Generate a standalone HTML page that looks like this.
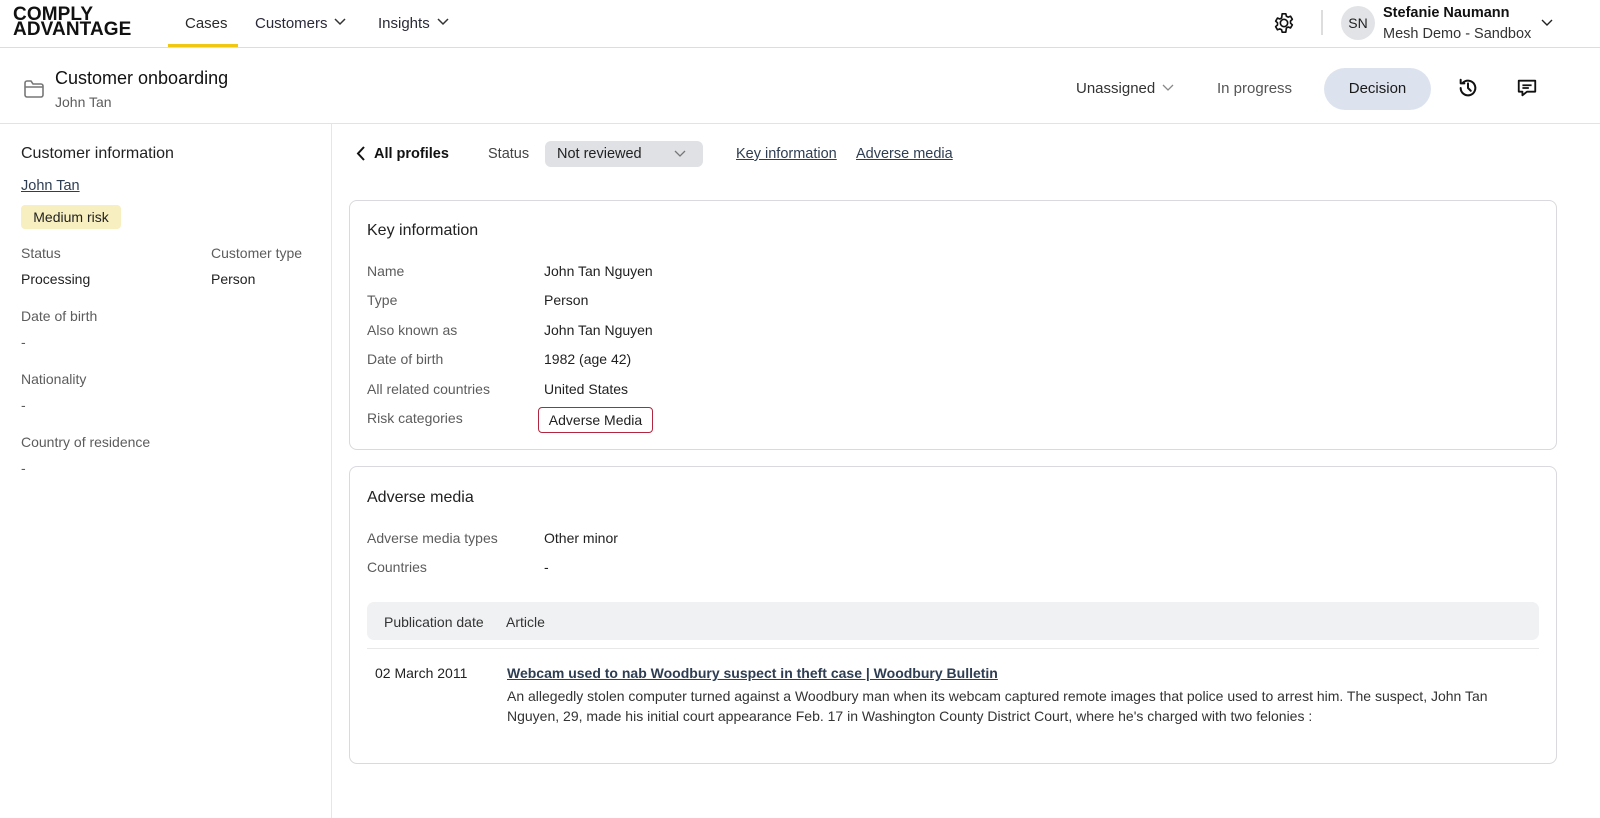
<!DOCTYPE html>
<html><head><meta charset="utf-8"><style>
*{box-sizing:border-box;margin:0;padding:0}
body{width:1600px;height:818px;overflow:hidden;background:#fff;font-family:"Liberation Sans",sans-serif;color:#1f1f1f;font-size:14px;position:relative}
.a{position:absolute;white-space:nowrap}
.g{color:#5c5c5c}
.lnk{color:#2e3d52;text-decoration:underline}
svg{position:absolute}
</style></head><body>
<div class="a" style="left:13px;top:7px;font-weight:900;font-size:19px;line-height:15px;letter-spacing:0.1px;color:#111">COMPLY<br>ADVANTAGE</div>
<div class="a" style="left:185px;top:15px;font-size:15px;color:#2a2a2a">Cases</div>
<div class="a" style="left:168px;top:44px;width:70px;height:3px;background:#f0c814"></div>
<div class="a" style="left:255px;top:15px;font-size:15px;color:#2a2a3a">Customers</div>
<svg style="left:334px;top:17px" width="12" height="10" viewBox="0 0 12 10"><path d="M1 2l5 5 5-5" stroke="#333" stroke-width="1.5" fill="none"/></svg>
<div class="a" style="left:378px;top:15px;font-size:15px;color:#2a2a3a">Insights</div>
<svg style="left:437px;top:17px" width="12" height="10" viewBox="0 0 12 10"><path d="M1 2l5 5 5-5" stroke="#333" stroke-width="1.5" fill="none"/></svg>
<div class="a" style="left:0;top:47px;width:1600px;height:1px;background:#ddd"></div>
<svg style="left:1273px;top:12px" width="22" height="22" viewBox="0 0 24 24"><path d="M12 8a4 4 0 1 0 0 8 4 4 0 0 0 0-8zM10 2h4l.6 2.6 2 1 2.5-1 2 3.4-2 1.8v2.4l2 1.8-2 3.4-2.5-1-2 1L14 22h-4l-.6-2.6-2-1-2.5 1-2-3.4 2-1.8v-2.4l-2-1.8 2-3.4 2.5 1 2-1z" fill="none" stroke="#111" stroke-width="1.8" stroke-linejoin="round"/></svg>
<div class="a" style="left:1321px;top:10px;width:2px;height:25px;background:#ddd"></div>
<div class="a" style="left:1341px;top:6px;width:34px;height:34px;border-radius:50%;background:#e2e3e6;text-align:center;line-height:34px;font-size:14px;color:#222">SN</div>
<div class="a" style="left:1383px;top:5px;font-size:14.5px;font-weight:bold;color:#111">Stefanie Naumann</div>
<div class="a" style="left:1383px;top:26px;font-size:14.5px;color:#333">Mesh Demo - Sandbox</div>
<svg style="left:1541px;top:18px" width="12" height="9" viewBox="0 0 12 9"><path d="M1 2l5 5 5-5" stroke="#222" stroke-width="1.4" fill="none"/></svg>
<svg style="left:23px;top:79px" width="22" height="20" viewBox="0 0 22 20"><path d="M2 4v12a2 2 0 0 0 2 2h14a2 2 0 0 0 2-2V7a2 2 0 0 0-2-2h-8L8 2H4a2 2 0 0 0-2 2zM2 8h18" fill="none" stroke="#777" stroke-width="1.6"/></svg>
<div class="a" style="left:55px;top:68px;font-size:18px;color:#111">Customer onboarding</div>
<div class="a g" style="left:55px;top:94px;font-size:14px">John Tan</div>
<div class="a" style="left:1076px;top:80px;font-size:15px;color:#333">Unassigned</div>
<svg style="left:1162px;top:83px" width="12" height="9" viewBox="0 0 12 9"><path d="M1 2l5 5 5-5" stroke="#888" stroke-width="1.3" fill="none"/></svg>
<div class="a" style="left:1217px;top:80px;font-size:15px;color:#555">In progress</div>
<div class="a" style="left:1324px;top:68px;width:107px;height:42px;border-radius:21px;background:#dde3ee;text-align:center;line-height:42px;font-size:15px;color:#1a1a1a">Decision</div>
<svg style="left:1457px;top:77px" width="22" height="22" viewBox="0 0 24 24"><path d="M4 12a8 8 0 1 0 2.4-5.7M4 3v4h4M12 7v5l3 3" fill="none" stroke="#111" stroke-width="2.2" stroke-linecap="round" stroke-linejoin="round"/></svg>
<svg style="left:1516px;top:77px" width="22" height="22" viewBox="0 0 24 24"><path d="M3 4h18v12H12l-5 4v-4H3zM7 9h10M7 12h7" fill="none" stroke="#111" stroke-width="2" stroke-linejoin="round"/></svg>
<div class="a" style="left:0;top:123px;width:1600px;height:1px;background:#e3e3e3"></div>
<div class="a" style="left:331px;top:124px;width:1px;height:694px;background:#e6e6e6"></div>
<div class="a" style="left:21px;top:145px;font-size:16px;color:#222">Customer information</div>
<div class="a lnk" style="left:21px;top:178px;font-size:14.5px">John Tan</div>
<div class="a" style="left:21px;top:205px;width:100px;height:24px;background:#f8efc0;border-radius:4px;text-align:center;line-height:24px;font-size:14px;color:#222">Medium risk</div>
<div class="a g" style="left:21px;top:245px">Status</div>
<div class="a g" style="left:211px;top:245px">Customer type</div>
<div class="a" style="left:21px;top:271px">Processing</div>
<div class="a" style="left:211px;top:271px">Person</div>
<div class="a g" style="left:21px;top:308px">Date of birth</div>
<div class="a g" style="left:21px;top:334px">-</div>
<div class="a g" style="left:21px;top:371px">Nationality</div>
<div class="a g" style="left:21px;top:397px">-</div>
<div class="a g" style="left:21px;top:434px">Country of residence</div>
<div class="a g" style="left:21px;top:460px">-</div>
<svg style="left:355px;top:145px" width="12" height="17" viewBox="0 0 12 17"><path d="M9 2L3 8.5 9 15" stroke="#111" stroke-width="2" fill="none"/></svg>
<div class="a" style="left:374px;top:146px;font-size:14.5px;font-weight:bold;color:#111">All profiles</div>
<div class="a" style="left:488px;top:146px;color:#444;font-size:14.5px">Status</div>
<div class="a" style="left:545px;top:141px;width:158px;height:26px;background:#dfe1e5;border-radius:6px"></div>
<div class="a" style="left:557px;top:146px;font-size:14.5px;color:#222">Not reviewed</div>
<svg style="left:674px;top:149px" width="12" height="9" viewBox="0 0 12 9"><path d="M1 2l5 5 5-5" stroke="#777" stroke-width="1.3" fill="none"/></svg>
<div class="a lnk" style="left:736px;top:146px;font-size:14.5px">Key information</div>
<div class="a lnk" style="left:856px;top:146px;font-size:14.5px">Adverse media</div>
<div class="a" style="left:349px;top:200px;width:1208px;height:250px;border:1px solid #d9d9de;border-radius:8px"></div>
<div class="a" style="left:367px;top:222px;font-size:16px;color:#222">Key information</div>
<div class="a g" style="left:367px;top:263px">Name</div><div class="a" style="left:544px;top:263px">John Tan Nguyen</div>
<div class="a g" style="left:367px;top:292px">Type</div><div class="a" style="left:544px;top:292px">Person</div>
<div class="a g" style="left:367px;top:322px">Also known as</div><div class="a" style="left:544px;top:322px">John Tan Nguyen</div>
<div class="a g" style="left:367px;top:351px">Date of birth</div><div class="a" style="left:544px;top:351px">1982 (age 42)</div>
<div class="a g" style="left:367px;top:381px">All related countries</div><div class="a" style="left:544px;top:381px">United States</div>
<div class="a g" style="left:367px;top:410px">Risk categories</div>
<div class="a" style="left:538px;top:407px;width:115px;height:26px;border:1px solid #b3263f;border-radius:4px;text-align:center;line-height:24px;font-size:14px">Adverse Media</div>
<div class="a" style="left:349px;top:466px;width:1208px;height:298px;border:1px solid #d9d9de;border-radius:8px"></div>
<div class="a" style="left:367px;top:489px;font-size:16px;color:#222">Adverse media</div>
<div class="a g" style="left:367px;top:530px">Adverse media types</div><div class="a" style="left:544px;top:530px">Other minor</div>
<div class="a g" style="left:367px;top:559px">Countries</div><div class="a" style="left:544px;top:559px">-</div>
<div class="a" style="left:367px;top:602px;width:1172px;height:38px;background:#f0f1f3;border-radius:7px"></div>
<div class="a" style="left:384px;top:614px;color:#333">Publication date</div>
<div class="a" style="left:506px;top:614px;color:#333">Article</div>
<div class="a" style="left:367px;top:648px;width:1172px;height:1px;background:#e8e8e8"></div>
<div class="a" style="left:375px;top:665px;color:#222">02 March 2011</div>
<div class="a lnk" style="left:507px;top:665px;font-weight:bold">Webcam used to nab Woodbury suspect in theft case | Woodbury Bulletin</div>
<div class="a" style="left:507px;top:686px;width:985px;white-space:normal;line-height:20px;color:#333;font-size:14px">An allegedly stolen computer turned against a Woodbury man when its webcam captured remote images that police used to arrest him. The suspect, John Tan Nguyen, 29, made his initial court appearance Feb. 17 in Washington County District Court, where he's charged with two felonies :</div>
</body></html>
